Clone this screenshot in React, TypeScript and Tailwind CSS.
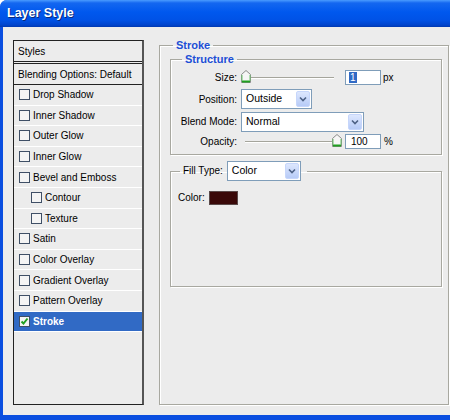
import React from 'react';

const styleRows = [
  { label: 'Drop Shadow' },
  { label: 'Inner Shadow' },
  { label: 'Outer Glow' },
  { label: 'Inner Glow' },
  { label: 'Bevel and Emboss' },
  { label: 'Contour', indent: true },
  { label: 'Texture', indent: true },
  { label: 'Satin' },
  { label: 'Color Overlay' },
  { label: 'Gradient Overlay' },
  { label: 'Pattern Overlay' },
  { label: 'Stroke', checked: true },
];

function Checkbox({ checked }: { checked?: boolean }) {
  return (
    <span className="flex h-[11px] w-[11px] shrink-0 items-center justify-center border border-[#3f4f66] bg-[#f4f4f4]">
      {checked && (
        <svg width="9" height="9" viewBox="0 0 9 9">
          <path d="M1.5 4.5 L3.5 6.5 L7.5 1.5" fill="none" stroke="#21a121" strokeWidth="2" />
        </svg>
      )}
    </span>
  );
}

function DropArrow() {
  return (
    <span className="flex h-full w-[14px] items-center justify-center rounded-[2px] border border-[#c6d6fb] bg-[linear-gradient(180deg,#dde7fe,#b7cbf7)]">
      <svg width="8" height="6" viewBox="0 0 8 6">
        <path d="M1 1.5 L4 4.5 L7 1.5" fill="none" stroke="#4d6185" strokeWidth="1.6" />
      </svg>
    </span>
  );
}

function Select({ value, width }: { value: string; width: string }) {
  return (
    <div className={`flex h-[20px] items-center border border-[#7f9db9] bg-white p-[1px] ${width}`}>
      <span className="flex-1 pl-[3px] text-[10.5px] text-black">{value}</span>
      <DropArrow />
    </div>
  );
}

function Thumb() {
  return (
    <svg width="10" height="13" viewBox="0 0 10 13">
      <path d="M5 0.5 L9.5 4.5 L9.5 12.5 L0.5 12.5 L0.5 4.5 Z" fill="#f6f6f6" stroke="#8a8a8a" />
      <path d="M1 11.5 L9 11.5" stroke="#1fa01f" strokeWidth="2" />
      <path d="M1 5 L1 11 M9 5 L9 11" stroke="#6cc46c" strokeWidth="1" />
    </svg>
  );
}

function Slider({ at }: { at: 'start' | 'end' }) {
  return (
    <div className="relative h-[14px] w-[100px]">
      <div className="absolute left-[5px] right-[6px] top-[7px] h-[2px] border-t border-[#a5a59c] bg-white" />
      <div className={`absolute top-0 ${at === 'start' ? 'left-[1px]' : 'left-[92px]'}`}>
        <Thumb />
      </div>
    </div>
  );
}

export default function App() {
  return (
    <div className="flex h-[420px] w-[450px] flex-col overflow-hidden rounded-tl-[7px] bg-[#0a4ee0] font-['Liberation_Sans',Arial,sans-serif] text-[10px] text-black">
      {/* title bar */}
      <div className="flex h-[27px] shrink-0 items-center bg-[linear-gradient(180deg,#4a9bff_0px,#1467f0_3px,#0058ee_12px,#0052e6_20px,#0044cc_25px,#0038b0_27px)] pl-[7px]">
        <span className="text-[12.5px] font-bold text-white [text-shadow:1px_1px_0_#0a2a7a]">Layer Style</span>
      </div>

      {/* client */}
      <div className="ml-[3px] flex h-[388px] shrink-0 items-start gap-[15px] bg-[#ececec] pl-[10px]">
        {/* styles list */}
        <div className="mt-[13px] flex h-[365px] w-[131px] shrink-0 flex-col border-b border-l border-r-2 border-t border-b-[#222] border-l-[#222] border-r-[#555] border-t-[#222] bg-[#ececec]">
          <div className="flex h-[23px] items-center border-b-[3px] border-double border-[#222] pl-[4px]">Styles</div>
          <div className="flex h-[21px] items-center border-b border-[#222] pl-[4px]">Blending Options: Default</div>
          {styleRows.map((r) => (
            <div
              key={r.label}
              className={`flex h-[20.6px] items-center gap-[3px] border-b border-white ${r.indent ? 'pl-[17px]' : 'pl-[5px]'} ${
                r.checked ? 'bg-[#316ac5] font-bold text-white' : ''
              }`}
            >
              <Checkbox checked={r.checked} />
              <span>{r.label}</span>
            </div>
          ))}
        </div>

        {/* stroke group */}
        <fieldset className="mt-[11.5px] h-[366.5px] w-[290px] shrink-0 border border-[#a8a8a0] p-0 shadow-[1px_1px_0_#fff,inset_1px_1px_0_#fff]">
          <legend className="ml-[13px] px-[3px] text-[11px] font-bold leading-[13px] text-[#1c4fd6]">Stroke</legend>
          <div className="pl-[10px] pt-[1px]">
            {/* structure */}
            <fieldset className="w-[272px] border border-[#a8a8a0] p-0 shadow-[1px_1px_0_#fff,inset_1px_1px_0_#fff]">
              <legend className="ml-[11px] px-[3px] text-[11px] font-bold leading-[13px] text-[#1c4fd6]">Structure</legend>
              <div className="flex flex-col pb-[5px] pt-[2.5px]">
                <div className="flex h-[18px] items-center">
                  <span className="w-[66px] text-right">Size:</span>
                  <div className="ml-[3px]">
                    <Slider at="start" />
                  </div>
                  <div className="ml-[5px] flex h-[15px] w-[36px] items-center border border-[#7f9db9] bg-white pl-[3px]">
                    <span className="bg-[#316ac5] px-[1px] leading-[11px] text-white">1</span>
                  </div>
                  <span className="ml-[2px]">px</span>
                </div>
                <div className="mt-[3px] flex h-[20px] items-center">
                  <span className="w-[66px] text-right">Position:</span>
                  <div className="ml-[4px]">
                    <Select value="Outside" width="w-[71px]" />
                  </div>
                </div>
                <div className="mt-[2px] flex h-[21px] items-center">
                  <span className="w-[66px] text-right">Blend Mode:</span>
                  <div className="ml-[4px]">
                    <Select value="Normal" width="w-[123px]" />
                  </div>
                </div>
                <div className="mt-[1px] flex h-[16px] items-center">
                  <span className="w-[66px] text-right">Opacity:</span>
                  <div className="ml-[3px]">
                    <Slider at="end" />
                  </div>
                  <div className="ml-[5px] flex h-[15px] w-[36px] items-center border border-[#7f9db9] bg-white pl-[5px]">
                    100
                  </div>
                  <span className="ml-[3px]">%</span>
                </div>
              </div>
            </fieldset>

            {/* fill type */}
            <fieldset className="mt-[6px] h-[126px] w-[272px] border border-[#a8a8a0] p-0 shadow-[1px_1px_0_#fff,inset_1px_1px_0_#fff]">
              <legend className="ml-[9px] flex items-center gap-[4px] pl-[3px] pr-[6px]">
                <span className="-mt-[2px]">Fill Type:</span>
                <Select value="Color" width="w-[74px]" />
              </legend>
              <div className="mt-[9px] flex items-center gap-[4px] pl-[7px]">
                <span>Color:</span>
                <span className="h-[14px] w-[29px] border border-[#5a4a4a] bg-[#3a0909]" />
              </div>
            </fieldset>
          </div>
        </fieldset>
      </div>
    </div>
  );
}
